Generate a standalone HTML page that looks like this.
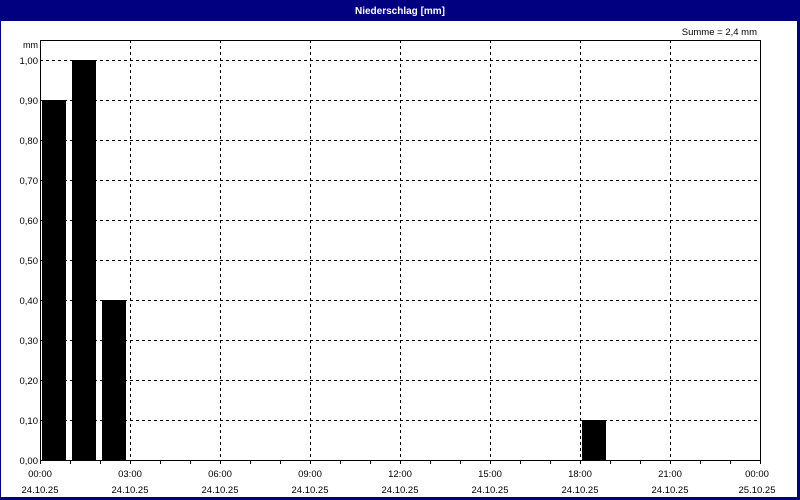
<!DOCTYPE html>
<html><head><meta charset="utf-8"><style>
html,body{margin:0;padding:0;background:#fff}
svg{display:block}
text{font-family:"Liberation Sans",sans-serif;font-size:9.5px;fill:#000}
</style></head><body>
<svg width="800" height="500" viewBox="0 0 800 500" xmlns="http://www.w3.org/2000/svg" shape-rendering="crispEdges">
<rect x="0" y="0" width="800" height="500" fill="#000080"/>
<rect x="1" y="21" width="796" height="476" fill="#fff"/>
<text x="400" y="14" text-anchor="middle" style="fill:#fff;font-weight:bold;font-size:10px">Niederschlag [mm]</text>
<text x="757" y="35" text-anchor="end">Summe = 2,4 mm</text>
<text x="38" y="48" text-anchor="end" style="font-size:9px">mm</text>
<g stroke="#000" stroke-width="1" stroke-dasharray="3,3">
<line x1="40" y1="60.5" x2="760" y2="60.5"/><line x1="40" y1="100.5" x2="760" y2="100.5"/>
<line x1="40" y1="140.5" x2="760" y2="140.5"/><line x1="40" y1="180.5" x2="760" y2="180.5"/>
<line x1="40" y1="220.5" x2="760" y2="220.5"/><line x1="40" y1="260.5" x2="760" y2="260.5"/>
<line x1="40" y1="300.5" x2="760" y2="300.5"/><line x1="40" y1="340.5" x2="760" y2="340.5"/>
<line x1="40" y1="380.5" x2="760" y2="380.5"/><line x1="40" y1="420.5" x2="760" y2="420.5"/>
<line x1="130.5" y1="40" x2="130.5" y2="460"/><line x1="220.5" y1="40" x2="220.5" y2="460"/>
<line x1="310.5" y1="40" x2="310.5" y2="460"/><line x1="400.5" y1="40" x2="400.5" y2="460"/>
<line x1="490.5" y1="40" x2="490.5" y2="460"/><line x1="580.5" y1="40" x2="580.5" y2="460"/>
<line x1="670.5" y1="40" x2="670.5" y2="460"/>
</g>
<g fill="#000">
<rect x="42" y="100" width="24" height="360"/>
<rect x="72" y="60" width="24" height="400"/>
<rect x="102" y="300" width="24" height="160"/>
<rect x="582" y="420" width="24" height="40"/>
</g>
<g stroke="#000" stroke-width="1" fill="none">
<polyline points="40.5,40 40.5,460.5 760.5,460.5 760.5,40.5 40,40.5"/>
<path d="M70.5 460v4M100.5 460v4M130.5 460v4M160.5 460v4M190.5 460v4M220.5 460v4M250.5 460v4M280.5 460v4M310.5 460v4M340.5 460v4M370.5 460v4M400.5 460v4M430.5 460v4M460.5 460v4M490.5 460v4M520.5 460v4M550.5 460v4M580.5 460v4M610.5 460v4M640.5 460v4M670.5 460v4M700.5 460v4M730.5 460v4M760.5 460v4M40.5 460v4"/>
</g>
<g text-anchor="end">
<text x="38" y="64">1,00</text><text x="38" y="104">0,90</text><text x="38" y="144">0,80</text>
<text x="38" y="184">0,70</text><text x="38" y="224">0,60</text><text x="38" y="264">0,50</text>
<text x="38" y="304">0,40</text><text x="38" y="344">0,30</text><text x="38" y="384">0,20</text>
<text x="38" y="424">0,10</text><text x="38" y="464">0,00</text>
</g>
<g text-anchor="middle">
<text x="40" y="477">00:00</text><text x="40" y="493">24.10.25</text>
<text x="130" y="477">03:00</text><text x="130" y="493">24.10.25</text>
<text x="220" y="477">06:00</text><text x="220" y="493">24.10.25</text>
<text x="310" y="477">09:00</text><text x="310" y="493">24.10.25</text>
<text x="400" y="477">12:00</text><text x="400" y="493">24.10.25</text>
<text x="490" y="477">15:00</text><text x="490" y="493">24.10.25</text>
<text x="580" y="477">18:00</text><text x="580" y="493">24.10.25</text>
<text x="670" y="477">21:00</text><text x="670" y="493">24.10.25</text>
<text x="757" y="477">00:00</text><text x="757" y="493">25.10.25</text>
</g>
</svg>
</body></html>
